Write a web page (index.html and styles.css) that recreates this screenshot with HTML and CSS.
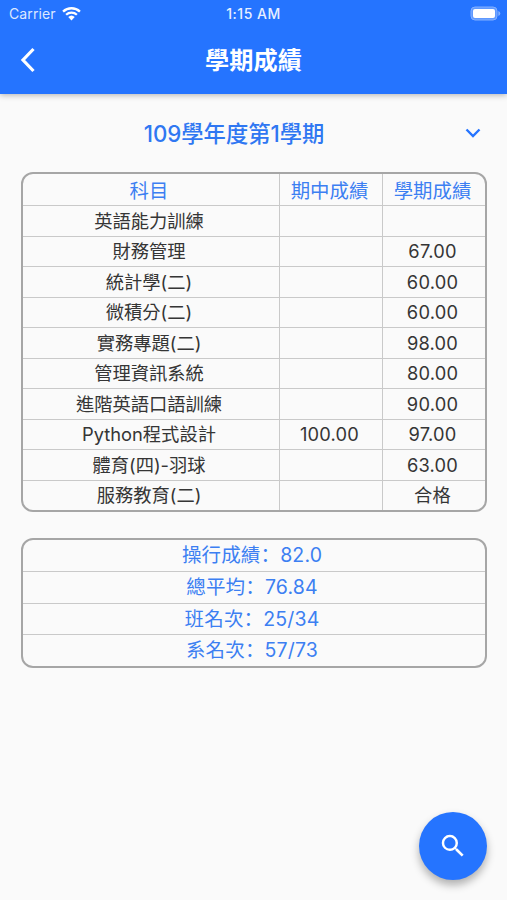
FILE: index.html
```
<!DOCTYPE html>
<html lang="zh-hant">
<head>
    <meta charset="utf-8" />
    <title>學期成績</title>
    <link rel="stylesheet" href="styles.css">
</head>
<body>
    <header class="app-bar">
        <div class="status-bar">
            <div class="carrier">
                <span>Carrier</span>
                <svg class="wifi" viewBox="0 0 18 14" width="19" height="15">
                    <path d="M1 5.2a11.6 11.6 0 0 1 16 0M3.9 8.2a7.4 7.4 0 0 1 10.2 0" />
                    <path class="dot" d="M9 13.6L5.9 10.4a4.5 4.5 0 0 1 6.2 0z" />
                </svg>
            </div>
            <div class="clock">1:15 AM</div>
            <div class="power">
                <svg viewBox="0 0 31 15" width="31" height="15">
                    <rect class="shell" x="1" y="1" width="26" height="13" rx="4" />
                    <rect x="3" y="3" width="22" height="9" rx="2" />
                    <path class="tip" d="M28.3 5v5q2-.8 2-2.5t-2-2.5z" />
                </svg>
            </div>
        </div>
        <div class="title-bar">
            <svg class="back" viewBox="0 0 16 26" width="16" height="26"><path d="M13.5 2L3 13l10.500 11" /></svg>
            <h1>學期成績</h1>
        </div>
    </header>

    <main>
        <div class="semester">
            <span>109學年度第1學期</span>
            <svg class="arrow" viewBox="0 0 16 10" width="16" height="10"><path d="M1.500 1.500L8 8l6.500-6.500" /></svg>
        </div>

        <div class="score-table">
            <div class="row head"><div>科目</div><div>期中成績</div><div>學期成績</div></div>
            <div class="row"><div>英語能力訓練</div><div></div><div></div></div>
            <div class="row"><div>財務管理</div><div></div><div>67.00</div></div>
            <div class="row"><div>統計學(二)</div><div></div><div>60.00</div></div>
            <div class="row"><div>微積分(二)</div><div></div><div>60.00</div></div>
            <div class="row"><div>實務專題(二)</div><div></div><div>98.00</div></div>
            <div class="row"><div>管理資訊系統</div><div></div><div>80.00</div></div>
            <div class="row"><div>進階英語口語訓練</div><div></div><div>90.00</div></div>
            <div class="row"><div>Python程式設計</div><div>100.00</div><div>97.00</div></div>
            <div class="row"><div>體育(四)-羽球</div><div></div><div>63.00</div></div>
            <div class="row"><div>服務教育(二)</div><div></div><div>合格</div></div>
        </div>

        <div class="summary">
            <div>操行成績<span class="colon" lang="zh-hans">：</span>82.0</div>
            <div>總平均<span class="colon" lang="zh-hans">：</span>76.84</div>
            <div>班名次<span class="colon" lang="zh-hans">：</span>25/34</div>
            <div>系名次<span class="colon" lang="zh-hans">：</span>57/73</div>
        </div>
    </main>

    <button class="search-btn" aria-label="搜尋">
        <svg viewBox="0 0 24 24" width="30" height="30">
            <path d="M15.500 14h-.79l-.28-.27A6.470 6.470 0 0 0 16 9.500 6.500 6.500 0 1 0 9.500 16c1.610 0 3.090-.59 4.230-1.570l.27.28v.79l5 4.990L20.490 19l-4.990-5zm-6 0C7.010 14 5 11.990 5 9.500S7.010 5 9.500 5 14 7.010 14 9.500 11.990 14 9.500 14z" />
        </svg>
    </button>
</body>
</html>
```

FILE: styles.css
```
* {
    box-sizing: border-box;
}

body {
    margin: 0;
    height: 900px;
    overflow: hidden;
    font-family: Inter, "Noto Sans CJK TC", sans-serif;
    background-color: #fafafa;
    color: #353535;
}

.app-bar {
    height: 94px;
    background-color: #2574ff;
    color: white;
    box-shadow: 0 1px 6px rgba(0, 0, 0, 0.3);
}

.status-bar {
    display: grid;
    grid-template-columns: 1fr auto 1fr;
    align-items: center;
    height: 27px;
    padding: 0 6px 0 9px;
    font-size: 14px;
}

.carrier {
    display: flex;
    align-items: center;
    gap: 6px;
    color: #dce8ff;
    letter-spacing: 0.1px;
}

.wifi {
    fill: none;
    stroke: white;
    stroke-width: 2.2;
}

.wifi .dot {
    fill: white;
    stroke: none;
}

.clock {
    padding-right: 3px;
    font-size: 14px;
    font-weight: 500;
    letter-spacing: 0.5px;
    color: #e8f0ff;
}

.power {
    display: flex;
    justify-content: flex-end;
    fill: white;
}

.power .shell {
    fill: #5f99ff;
    stroke: #83b0ff;
}

.power .tip {
    fill: #83b0ff;
}

.title-bar {
    display: grid;
    grid-template-columns: 1fr auto 1fr;
    align-items: center;
    height: 65px;
    padding: 0 20px;
}

.back {
    fill: none;
    stroke: white;
    stroke-width: 3.2;
}

h1 {
    margin: 0;
    padding-top: 2px;
    font-size: 24.2px;
    line-height: 36px;
    font-weight: bold;
}

main {
    padding: 0 20px 0 21px;
}

.semester {
    display: flex;
    align-items: center;
    height: 78px;
    padding-right: 6px;
    font-size: 22.3px;
    font-weight: 500;
    color: #2f77f2;
}

.semester span {
    flex: 1;
    padding: 0 18px 3px 0;
    text-align: center;
}

.arrow {
    fill: none;
    stroke: #2574ff;
    stroke-width: 2.4;
}

.score-table, .summary {
    border: 2px solid #a6a6a6;
    border-radius: 12px;
}

.score-table {
    height: 340px;
    display: grid;
    grid-template-rows: 31px repeat(10, 1fr);
    font-size: 18.3px;
}

.row {
    display: grid;
    grid-template-columns: 256px 103px 1fr;
    min-height: 0;
}

.row + .row, .summary div + div {
    border-top: 1px solid #c9c9c9;
}

.row div {
    display: flex;
    align-items: center;
    justify-content: center;
    min-height: 0;
    padding-right: 4px;
    line-height: 28px;
}

.row div + div {
    padding-right: 3px;
    border-left: 1px solid #c9c9c9;
    letter-spacing: 0.2px;
}

.row.head div {
    padding-top: 2px;
    letter-spacing: 0;
}

.head {
    font-size: 19.4px;
    color: #3c7ff2;
}

.summary {
    display: grid;
    grid-template-rows: 31px repeat(3, 1fr);
    height: 130px;
    margin-top: 26px;
    font-size: 19.5px;
    line-height: 30px;
    text-align: center;
    color: #3c7ff2;
}

.summary div {
    min-height: 0;
    padding-right: 4px;
    letter-spacing: 0.15px;
}

.summary .colon {
    font-family: "Noto Sans CJK SC", sans-serif;
    line-height: 1;
}

.search-btn {
    position: absolute;
    right: 20px;
    bottom: 20px;
    display: flex;
    align-items: center;
    justify-content: center;
    width: 68px;
    height: 68px;
    padding: 0;
    border: none;
    border-radius: 50%;
    background-color: #2574ff;
    box-shadow: 0 5px 9px rgba(0, 0, 0, 0.3);
    fill: white;
    cursor: pointer;
}
```
